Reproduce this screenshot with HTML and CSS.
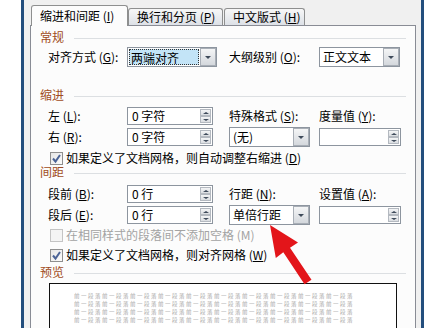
FILE: index.html
```html
<!DOCTYPE html>
<html lang="zh-CN">
<head>
    <meta charset="UTF-8">
    <meta name="viewport" content="width=device-width, initial-scale=1.0">
    <title>段落</title>
    <link rel="stylesheet" href="styles.css">
</head>
<body>
    <div class="window">
        <div class="tabs">
            <div class="tab active">缩进和间距 (<u>I</u>)</div>
            <div class="tab second">换行和分页 (<u>P</u>)</div>
            <div class="tab third">中文版式 (<u>H</u>)</div>
        </div>
        <div class="panel">
            <div class="group-title">常规</div>
            <div class="row row-general">
                <span class="label">对齐方式 (<u>G</u>):</span>
                <div class="select wide focus"><span class="value"><span class="sel">两端对齐</span></span><span class="drop"></span></div>
                <span class="label">大纲级别 (<u>O</u>):</span>
                <div class="select"><span class="value">正文文本</span><span class="drop"></span></div>
            </div>

            <div class="group-title indent-title">缩进</div>
            <div class="row row-left">
                <span class="label">左 (<u>L</u>):</span>
                <div class="spin"><span class="value">0 字符</span><span class="arrows"><i class="up"></i><i class="down"></i></span></div>
                <span class="label">特殊格式 (<u>S</u>):</span>
                <span class="label">度量值 (<u>Y</u>):</span>
            </div>
            <div class="row row-right">
                <span class="label">右 (<u>R</u>):</span>
                <div class="spin"><span class="value">0 字符</span><span class="arrows"><i class="up"></i><i class="down"></i></span></div>
                <div class="select"><span class="value">(无)</span><span class="drop"></span></div>
                <div class="spin narrow"><span class="value"></span><span class="arrows"><i class="up"></i><i class="down"></i></span></div>
            </div>
            <div class="check-row check-indent">
                <span class="box checked"><svg width="11" height="11" viewBox="0 0 11 11"><path d="M2 5.5 L4.5 8.5 L9 2" fill="none" stroke="#4b6396" stroke-width="2"/></svg></span>
                <span>如果定义了文档网格，则自动调整右缩进 (<u>D</u>)</span>
            </div>

            <div class="group-title">间距</div>
            <div class="row row-before">
                <span class="label">段前 (<u>B</u>):</span>
                <div class="spin"><span class="value">0 行</span><span class="arrows"><i class="up"></i><i class="down"></i></span></div>
                <span class="label">行距 (<u>N</u>):</span>
                <span class="label">设置值 (<u>A</u>):</span>
            </div>
            <div class="row row-after">
                <span class="label">段后 (<u>E</u>):</span>
                <div class="spin"><span class="value">0 行</span><span class="arrows"><i class="up"></i><i class="down"></i></span></div>
                <div class="select"><span class="value">单倍行距</span><span class="drop"></span></div>
                <div class="spin narrow"><span class="value"></span><span class="arrows"><i class="up"></i><i class="down"></i></span></div>
            </div>
            <div class="check-row disabled check-space">
                <span class="box"></span>
                <span>在相同样式的段落间不添加空格 (M)</span>
            </div>
            <div class="check-row check-grid">
                <span class="box checked"><svg width="11" height="11" viewBox="0 0 11 11"><path d="M2 5.5 L4.5 8.5 L9 2" fill="none" stroke="#4b6396" stroke-width="2"/></svg></span>
                <span>如果定义了文档网格，则对齐网格 (<u>W</u>)</span>
            </div>

            <div class="group-title preview-title">预览</div>
            <div class="preview">
                <div class="preview-line">前一段落前一段落前一段落前一段落前一段落前一段落前一段落前一段落前一段落前一段落</div>
                <div class="preview-line">前一段落前一段落前一段落前一段落前一段落前一段落前一段落前一段落前一段落前一段落</div>
                <div class="preview-line">前一段落前一段落前一段落前一段落前一段落前一段落前一段落前一段落前一段落前一段落</div>
                <div class="preview-line">前一段落前一段落前一段落前一段落前一段落前一段落前一段落前一段落前一段落前一段落</div>
            </div>
        </div>
    </div>

    <svg class="arrow" width="447" height="328" viewBox="0 0 447 328">
        <polygon points="270,225 298,242.5 290,247.8 311.5,279.8 304.5,284.2 283.3,252.2 275.8,258" fill="#e3151a"/>
    </svg>
</body>
</html>
```

FILE: styles.css
```css
body {
    margin: 0;
    width: 447px;
    height: 328px;
    overflow: hidden;
    position: relative;
    background: #fff;
    font-family: "Noto Sans CJK SC", "Noto Sans", sans-serif;
    font-size: 12px;
    color: #000;
}
u {
    text-decoration: underline;
}
.window {
    box-sizing: border-box;
    width: 403px;
    height: 328px;
    margin-left: 21px;
    padding: 0 5px 0 6px;
    border-left: 3px solid #234e7d;
    border-right: 3px solid #234e7d;
    background: #f0f0f0;
    overflow: hidden;
}
.tabs {
    display: flex;
    align-items: flex-end;
    height: 25px;
    padding-left: 1px;
}
.tab {
    box-sizing: border-box;
    height: 17px;
    line-height: 16px;
    padding-left: 8px;
    border: 1px solid #8e8f8f;
    border-bottom: none;
    border-radius: 3px 3px 0 0;
    background: linear-gradient(#f7f7f7, #dde1e7);
    white-space: nowrap;
    overflow: hidden;
}
.tab.active {
    width: 97px;
    height: 21px;
    line-height: 19px;
    margin-bottom: -1px;
    background: #fcfcfc;
    position: relative;
    z-index: 1;
}
.tab.second {
    width: 95px;
}
.tab.third {
    width: 81px;
    margin-left: 1px;
}
.panel {
    height: 400px;
    padding: 4px 9px 0 9px;
    border: 1px solid #898c95;
    background: #fcfcfc;
}
.group-title {
    display: flex;
    align-items: center;
    height: 14px;
    line-height: 14px;
    color: #a04b22;
}
.group-title::after {
    content: "";
    flex: 1;
    margin-left: 10px;
    margin-top: 3px;
    border-top: 1px solid #dcdfe2;
}
.indent-title {
    margin-top: 21px;
}
.preview-title {
    margin-top: 3px;
}
.row {
    display: grid;
    grid-template-columns: 79px 102px 90px 81px;
    align-items: center;
    height: 20px;
    margin-left: 8px;
}
.row-general {
    margin-top: 3px;
}
.row-left {
    margin-top: 4px;
}
.row-right,
.row-after {
    margin-top: 1px;
}
.row-before {
    margin-top: 5px;
}
.label {
    white-space: nowrap;
    line-height: 14px;
}
.select {
    box-sizing: border-box;
    display: flex;
    width: 81px;
    height: 20px;
    border: 1px solid #8d959f;
    background: #fff;
}
.select.wide {
    width: 90px;
}
.select .value {
    flex: 1;
    padding-left: 3px;
    line-height: 18px;
    white-space: nowrap;
    overflow: hidden;
}
.select.focus .value {
    padding: 1px;
}
.select.focus .sel {
    display: block;
    height: 16px;
    line-height: 16px;
    padding-left: 1px;
    border: 1px dotted #333;
    box-sizing: border-box;
    background: #c3e4f7;
}
.drop {
    box-sizing: border-box;
    width: 16px;
    height: 18px;
    border: 1px solid #a8aeb6;
    background: linear-gradient(#f4f5f6, #d4d8dd);
    display: flex;
    align-items: center;
    justify-content: center;
}
.drop::after {
    content: "";
    border-left: 3px solid transparent;
    border-right: 3px solid transparent;
    border-top: 3px solid #3e4a5a;
}
.spin {
    box-sizing: border-box;
    display: flex;
    width: 86px;
    height: 18px;
    border: 1px solid #8d959f;
    background: #fff;
}
.spin.narrow {
    width: 82px;
}
.spin .value {
    flex: 1;
    padding-left: 4px;
    line-height: 16px;
    white-space: nowrap;
}
.arrows {
    display: flex;
    flex-direction: column;
    width: 11px;
    margin: 1px;
}
.arrows i {
    flex: 1;
    box-sizing: border-box;
    border: 1px solid #b4b9c0;
    background: linear-gradient(#f4f5f6, #dadde1);
    display: flex;
    align-items: center;
    justify-content: center;
}
.arrows i.up::after {
    content: "";
    border-left: 3px solid transparent;
    border-right: 3px solid transparent;
    border-bottom: 2px solid #3e4a5a;
}
.arrows i.down::after {
    content: "";
    border-left: 3px solid transparent;
    border-right: 3px solid transparent;
    border-top: 2px solid #3e4a5a;
}
.check-row {
    display: flex;
    align-items: center;
    gap: 3px;
    height: 14px;
    line-height: 14px;
    margin-left: 10px;
    white-space: nowrap;
}
.check-indent {
    margin-top: 4px;
}
.check-space {
    margin-top: 3px;
}
.check-grid {
    margin-top: 6px;
}
.check-row.disabled {
    color: #a3a3a3;
}
.box {
    box-sizing: border-box;
    width: 13px;
    height: 13px;
    border: 1px solid #8f8f8f;
    background: linear-gradient(135deg, #e6e6e6, #fbfbfb);
    display: flex;
    align-items: center;
    justify-content: center;
}
.check-row.disabled .box {
    border-color: #c4c4c4;
    background: #f4f4f4;
}
.preview {
    box-sizing: border-box;
    width: 348px;
    height: 80px;
    margin: 4px 0 0 9px;
    padding: 8px 0 0 24px;
    border: 1px solid #111;
    background: #fff;
}
.preview-line {
    width: 280px;
    height: 8px;
    line-height: 8px;
    font-size: 5.5px;
    letter-spacing: 1.5px;
    color: #a9a9a9;
    white-space: nowrap;
    overflow: hidden;
}
.arrow {
    position: absolute;
    left: 0;
    top: 0;
    pointer-events: none;
}
```
